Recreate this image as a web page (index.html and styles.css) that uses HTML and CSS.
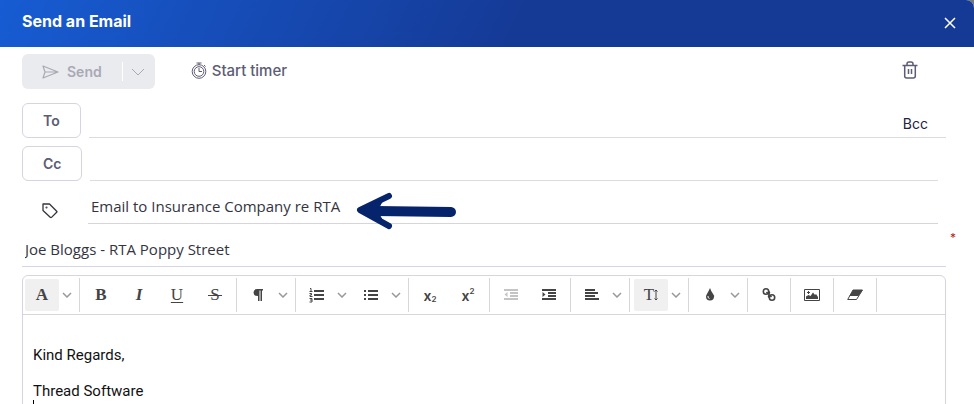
FILE: index.html
```html
<!DOCTYPE html>
<html lang="en">
<head>
    <meta charset="UTF-8">
    <meta name="viewport" content="width=device-width, initial-scale=1.0">
    <title>Send an Email</title>
    <link rel="stylesheet" href="styles.css">
</head>
<body>

<div class="dialog">
    <header class="dialog-header">
        <h1>Send an Email</h1>
        <button class="close-btn" aria-label="Close">
            <svg width="12" height="12" viewBox="0 0 12 12" fill="none" stroke="currentColor" stroke-width="1.5"><path d="M1 1l10 10M11 1L1 11"/></svg>
        </button>
    </header>

    <form class="email-form">
        <div class="actions">
            <div class="send-group">
                <button type="button" class="send-btn" disabled>
                    <svg width="17" height="14" viewBox="0 0 17 14" fill="none" stroke="currentColor" stroke-width="1.2" stroke-linejoin="round"><path d="M1 1l15 6-15 6 2-6zM3 7h12"/></svg>
                    Send
                </button>
                <button type="button" class="send-more" aria-label="More send options" disabled>
                    <svg width="14" height="8" viewBox="0 0 14 8" fill="none" stroke="currentColor"><path d="M1 1l6 6 6-6"/></svg>
                </button>
            </div>
            <button type="button" class="timer-btn">
                <svg width="16" height="17" viewBox="0 0 16 17" fill="none" stroke="currentColor"><circle cx="8" cy="9.5" r="6.8"/><circle cx="8" cy="9.5" r="4.8"/><path d="M5.500 1h5M8 1v2M8 6v3.500h3M13 3l1.500 1.500"/></svg>
                Start timer
            </button>
            <button type="button" class="delete-btn" aria-label="Delete">
                <svg width="16" height="18" viewBox="0 0 16 18" fill="none" stroke="currentColor" stroke-width="1.5"><path d="M0.500 4.500h15M2.700 4.500v10.500q0 2 2 2h6.600q2 0 2-2V4.500M5 4.500V3q0-2 2-2h2q2 0 2 2v1.500M6.500 8v5M9.500 8v5"/></svg>
            </button>
        </div>

        <div class="row">
            <button type="button" class="address-btn">To</button>
            <div class="field">
                <input type="text" aria-label="To">
                <button type="button" class="bcc-btn">Bcc</button>
            </div>
        </div>

        <div class="row row-inset">
            <button type="button" class="address-btn">Cc</button>
            <div class="field">
                <input type="text" aria-label="Cc">
            </div>
        </div>

        <div class="row row-inset">
            <label class="subject-label" for="subject" aria-label="Subject">
                <svg width="16" height="16" viewBox="0 0 16 16" fill="none" stroke="currentColor" stroke-width="1.3" stroke-linejoin="round"><path d="M1 1h6.500l7.200 7.200q.5.500 0 1l-5.200 5.200q-.5.500-1 0L1 7.500z"/><circle cx="4.500" cy="4.500" r=".4"/></svg>
            </label>
            <div class="field field-tinted">
                <input type="text" id="subject" value="Email to Insurance Company re RTA">
            </div>
            <svg class="arrow" width="100" height="38" viewBox="0 0 100 38" fill="none" stroke="currentColor" stroke-linecap="round" stroke-linejoin="round"><path stroke-width="10" d="M20 19l75 1"/><path stroke-width="6" d="M33 4L4 18l29 16"/><path fill="currentColor" d="M4 18l23-10-6 11 6 10z"/></svg>
        </div>

        <div class="row row-matter">
            <div class="field field-tinted">
                <input type="text" aria-label="Matter" value="Joe Bloggs - RTA Poppy Street" required>
            </div>
            <span class="required">*</span>
        </div>

        <div class="editor">
            <div class="toolbar">
                <div class="tool-group tool-group-first">
                    <button type="button" class="tool active letter bold" aria-label="Font">A</button>
                    <button type="button" class="caret-btn" aria-label="Font list"><svg width="10" height="6" viewBox="0 0 10 6"><path d="M1 1l4 4 4-4"/></svg></button>
                </div>
                <div class="tool-group">
                    <button type="button" class="tool letter bold">B</button>
                    <button type="button" class="tool letter italic">I</button>
                    <button type="button" class="tool letter underline">U</button>
                    <button type="button" class="tool letter strike">S</button>
                </div>
                <div class="tool-group">
                    <button type="button" class="tool" aria-label="Paragraph format">
                        <svg width="16" height="16" viewBox="0 0 16 16" fill="currentColor"><path d="M7.500 2H13v1.500h-1V14h-1.500V3.500h-1V14H8V9Q3.500 9 3.500 5.500T7.500 2z"/></svg>
                    </button>
                    <button type="button" class="caret-btn" aria-label="Paragraph list"><svg width="10" height="6" viewBox="0 0 10 6"><path d="M1 1l4 4 4-4"/></svg></button>
                </div>
                <div class="tool-group">
                    <button type="button" class="tool" aria-label="Numbered list">
                        <svg width="16" height="16" viewBox="0 0 16 16" fill="none" stroke="currentColor"><path stroke-width="2" d="M5 4h10M5 8h10M5 12h10"/><path d="M1 1.500h1v3M.500 4.500h3M.500 6.500h2v1.500h-1.500v1.500h2.500M.500 11.500h2.500v3.500H.500M1 13h2"/></svg>
                    </button>
                    <button type="button" class="caret-btn" aria-label="Number styles"><svg width="10" height="6" viewBox="0 0 10 6"><path d="M1 1l4 4 4-4"/></svg></button>
                    <button type="button" class="tool" aria-label="Bulleted list">
                        <svg width="16" height="16" viewBox="0 0 16 16" fill="none" stroke="currentColor" stroke-width="2"><path d="M5 4h10M5 8h10M5 12h10M1 4h2M1 8h2M1 12h2"/></svg>
                    </button>
                    <button type="button" class="caret-btn" aria-label="Bullet styles"><svg width="10" height="6" viewBox="0 0 10 6"><path d="M1 1l4 4 4-4"/></svg></button>
                </div>
                <div class="tool-group">
                    <button type="button" class="tool script">x<sub>2</sub></button>
                    <button type="button" class="tool script">x<sup>2</sup></button>
                </div>
                <div class="tool-group">
                    <button type="button" class="tool" aria-label="Decrease indent" disabled>
                        <svg width="16" height="16" viewBox="0 0 16 16" fill="currentColor"><path d="M1 2h14v2H1zM7 5h8v2H7zM7 8h8v2H7zM1 11h14v2H1zM4.500 5v5L1.500 7.500z"/></svg>
                    </button>
                    <button type="button" class="tool" aria-label="Increase indent">
                        <svg width="16" height="16" viewBox="0 0 16 16" fill="currentColor"><path d="M1 2h14v2H1zM7 5h8v2H7zM7 8h8v2H7zM1 11h14v2H1zM1.500 5v5l3-2.500z"/></svg>
                    </button>
                </div>
                <div class="tool-group">
                    <button type="button" class="tool" aria-label="Align">
                        <svg width="16" height="16" viewBox="0 0 16 16" fill="currentColor"><path d="M1 2h10v2H1zM1 5h13v2H1zM1 8h10v2H1zM1 11h14v2H1z"/></svg>
                    </button>
                    <button type="button" class="caret-btn" aria-label="Align list"><svg width="10" height="6" viewBox="0 0 10 6"><path d="M1 1l4 4 4-4"/></svg></button>
                </div>
                <div class="tool-group">
                    <button type="button" class="tool active letter" aria-label="Font size">
                        T<svg width="4" height="12" viewBox="0 0 4 12" fill="none" stroke="currentColor"><path d="M2 1v10M.500 2.500L2 1l1.500 1.500M.500 9.500L2 11l1.500-1.500"/></svg>
                    </button>
                    <button type="button" class="caret-btn" aria-label="Font sizes"><svg width="10" height="6" viewBox="0 0 10 6"><path d="M1 1l4 4 4-4"/></svg></button>
                </div>
                <div class="tool-group">
                    <button type="button" class="tool" aria-label="Text colour">
                        <svg width="16" height="16" viewBox="0 0 16 16"><path fill="currentColor" d="M8 1q1 3 2.800 5.500T12 9.500a4 4 0 0 1-8 0q0-1.200 1.200-3T8 1z"/><path fill="none" stroke="#fff" d="M6 9q-.5 2 1.500 2.500"/></svg>
                    </button>
                    <button type="button" class="caret-btn" aria-label="Colours"><svg width="10" height="6" viewBox="0 0 10 6"><path d="M1 1l4 4 4-4"/></svg></button>
                </div>
                <div class="tool-group">
                    <button type="button" class="tool" aria-label="Insert link">
                        <svg width="16" height="16" viewBox="0 0 16 16" fill="none" stroke="currentColor" stroke-width="1.6"><circle cx="5" cy="4.500" r="2.700"/><circle cx="11" cy="10.500" r="2.700"/><path d="M5.500 5l5 5M8 4.500q1 1 0 2.500M8 10.500q-1-1 0-2.500"/></svg>
                    </button>
                </div>
                <div class="tool-group">
                    <button type="button" class="tool" aria-label="Insert image">
                        <svg width="16" height="16" viewBox="0 0 16 16"><path fill="none" stroke="currentColor" d="M.5 2.500h15v11H.5z"/><path fill="currentColor" d="M2 12V9.500l2.500-1.500 2 1L9 5.500l2 2.500 1-1 2 3v2zM4 4h1v1h1v1H5v1H4V6H3V5h1z"/></svg>
                    </button>
                </div>
                <div class="tool-group">
                    <button type="button" class="tool" aria-label="Clear formatting">
                        <svg width="16" height="16" viewBox="0 0 16 16"><path fill="none" stroke="currentColor" d="M6 3h9.500l-6 9.500H.700z"/><path fill="currentColor" d="M6 3h9.500l-4 6H2.500z"/></svg>
                    </button>
                </div>
            </div>
            <div class="editor-body" contenteditable="true" role="textbox" aria-label="Message">
                <p>Kind Regards,</p>
                <p>Thread Software</p>
                <span class="text-cursor"></span>
            </div>
        </div>
    </form>
</div>

</body>
</html>
```
FILE: styles.css
```css
* {
    box-sizing: border-box;
}
body {
    margin: 0;
    height: 100vh;
    overflow: hidden;
    background-color: #777;
    font-family: Inter, sans-serif;
    font-size: 14px;
    color: #34343f;
}
button,
input {
    font: inherit;
    color: inherit;
    background: none;
    border: none;
    padding: 0;
    margin: 0;
}
button {
    display: flex;
    align-items: center;
    justify-content: center;
    cursor: pointer;
}
svg {
    flex: none;
    display: block;
}
.dialog {
    min-height: 100vh;
    background-color: #fff;
    border-top-right-radius: 8px;
}
.dialog-header {
    display: flex;
    align-items: center;
    justify-content: space-between;
    height: 47px;
    padding: 0 18px 2px 22px;
    color: #fff;
    background: linear-gradient(115deg, #175cd3 0%, #153a96 53%);
    border-top-right-radius: 8px;
}
.dialog-header h1 {
    margin: 0;
    padding-bottom: 3px;
    font-size: 16px;
    font-weight: 700;
}
.email-form {
    display: flex;
    flex-direction: column;
    gap: 8px;
    padding: 7px 28px 0 22px;
}
.actions {
    display: flex;
    align-items: center;
    height: 35px;
    margin-bottom: 6px;
    color: #5c5c75;
}
.send-group {
    display: flex;
    align-items: center;
    height: 35px;
    border-radius: 6px;
    background-color: #eaebef;
    color: #a9a9b5;
}
.send-btn {
    gap: 8px;
    padding: 0 20px;
    font-weight: 600;
}
.send-more {
    height: 19px;
    padding: 0 10px 0 8px;
    border-left: 1px solid #fff;
}
.timer-btn {
    gap: 5px;
    margin-left: 36px;
    padding-bottom: 2px;
    font-size: 15px;
    font-weight: 500;
}
.delete-btn {
    margin-left: auto;
    margin-right: 28px;
    padding-bottom: 3px;
}
.row {
    position: relative;
    display: flex;
    gap: 8px;
    height: 35px;
}
.row-inset {
    padding-right: 8px;
}
.address-btn {
    padding: 0 20px;
    border: 1px solid #d6d4e4;
    border-radius: 6px;
    color: #5c5c75;
    font-weight: 600;
}
.field {
    flex: 1;
    display: flex;
    border-bottom: 1px solid #dcdce0;
}
.field-tinted {
    border-color: #d6d4e4;
}
.field input {
    flex: 1;
    min-width: 0;
    padding: 0 3px 1px;
    outline: none;
    font-family: "Open Sans", sans-serif;
    font-size: 15px;
}
.bcc-btn {
    padding: 7px 18px 0 0;
    color: #1d2340;
}
.subject-label {
    display: flex;
    align-items: center;
    width: 58px;
    padding: 8px 0 0 20px;
}
.arrow {
    position: absolute;
    left: 334px;
    top: 3px;
    color: #06246b;
}
.required {
    position: absolute;
    right: -10px;
    top: 0;
    color: #b3261e;
    font-size: 12px;
    line-height: 12px;
}
.editor {
    border: 1px solid #d6d4e4;
    border-radius: 6px;
}
.toolbar {
    display: flex;
    height: 39px;
    padding: 2px 0;
    border-bottom: 1px solid #d6d6dc;
    color: #444;
}
.tool-group {
    display: flex;
    align-items: center;
    padding: 0 2px;
    border-right: 1px solid #d6d6dc;
}
.tool-group-first {
    padding-left: 0;
}
.tool {
    width: 34px;
    height: 32px;
    margin-left: 2px;
    border-radius: 2px;
}
.tool:not(:has(+ .caret-btn)) {
    margin-right: 2px;
}
.tool.active {
    background-color: #f0f0f0;
}
.tool:disabled {
    color: #c4c4c4;
}
.letter {
    font-family: "Liberation Serif", serif;
    font-size: 17px;
}
.bold {
    font-weight: 700;
}
.italic {
    font-style: italic;
    font-weight: 700;
}
.underline {
    text-decoration: underline;
    text-underline-offset: 2px;
}
/* the bar runs a little wider than the letter */
.strike {
    background: linear-gradient(#444, #444) center / 14px 1px no-repeat;
}
.script {
    font-size: 14px;
    font-weight: 600;
}
.script sub,
.script sup {
    font-size: 8px;
    line-height: 8px;
}
.script sub {
    align-self: flex-end;
    padding-bottom: 8px;
}
.script sup {
    align-self: flex-start;
    padding-top: 8px;
}
.caret-btn {
    width: 16px;
    height: 32px;
    margin-right: 2px;
    color: #999;
}
.caret-btn path {
    fill: none;
    stroke: currentColor;
    stroke-width: 1.5;
}
.editor-body {
    min-height: 160px;
    padding: 31px 10px;
    outline: none;
    font-family: Roboto, sans-serif;
    font-size: 15px;
    line-height: 18px;
    color: #111;
}
.editor-body p {
    margin: 0 0 18px;
}
.editor-body p:last-of-type {
    margin-bottom: 0;
}
.text-cursor {
    display: block;
    width: 1px;
    height: 18px;
    background-color: #000;
}
```
